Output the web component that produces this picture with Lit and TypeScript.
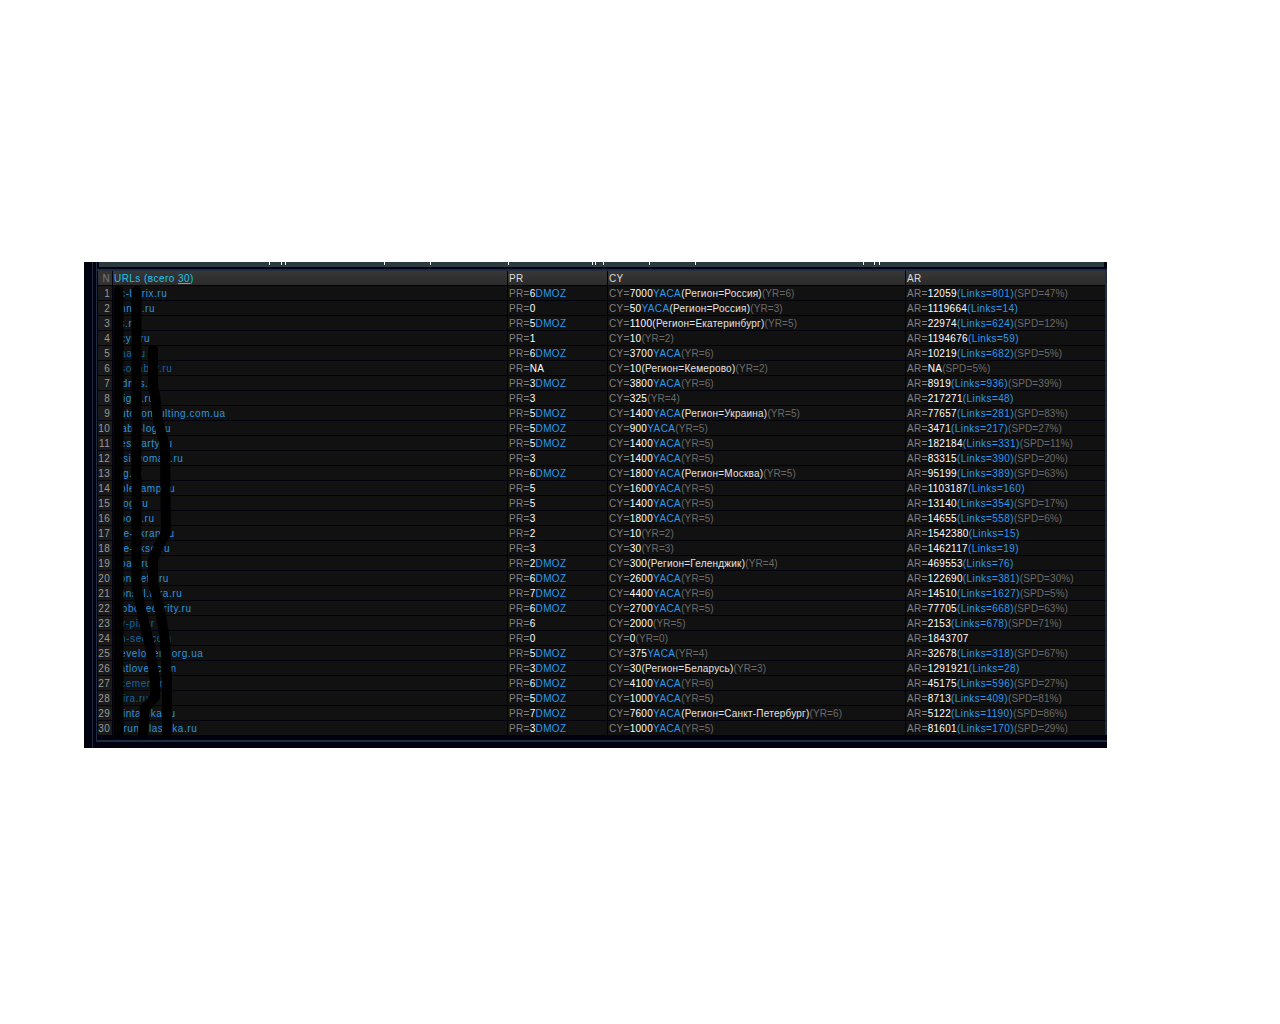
import { LitElement, html, css, svg } from "lit";
import { customElement } from "lit/decorators.js";

const R = (u: string, pr: string, d: number, cy: string, y: number, reg: string, yr: string, ar: string, l: string, s: string, dim = 0) =>
  ({ u, pr, d: !!d, cy, y: !!y, reg, yr, ar, l, s, dim: !!dim });

const rows = [
  R("1c-bitrix.ru", "6", 1, "7000", 1, "Россия", "6", "12059", "801", "47"),
  R("1nn.n.ru", "0", 0, "50", 1, "Россия", "3", "1119664", "14", ""),
  R("ss.ru", "5", 1, "1100", 0, "Екатеринбург", "5", "22974", "624", "12"),
  R("acys.ru", "1", 0, "10", 0, "", "2", "1194676", "59", ""),
  R("aaa.ru", "6", 1, "3700", 1, "", "6", "10219", "682", "5", 1),
  R("asocabar.ru", "NA", 0, "10", 0, "Кемерово", "2", "NA", "", "5", 1),
  R("wdnss.ru", "3", 1, "3800", 1, "", "6", "8919", "936", "39"),
  R("migor.ru", "3", 0, "325", 0, "", "4", "217271", "48", ""),
  R("autoconsulting.com.ua", "5", 1, "1400", 1, "Украина", "5", "77657", "281", "83"),
  R("frabs-log.ru", "5", 1, "900", 1, "", "5", "3471", "217", "27"),
  R("1es.party.ru", "5", 1, "1400", 1, "", "5", "182184", "331", "11"),
  R("lesi-woman.ru", "3", 0, "1400", 1, "", "5", "83315", "390", "20"),
  R("mg.ru", "6", 1, "1800", 1, "Москва", "5", "95199", "389", "63"),
  R("ablexamp.ru", "5", 0, "1600", 1, "", "5", "1103187", "160", ""),
  R("blog.ru", "5", 0, "1400", 1, "", "5", "13140", "354", "17"),
  R("zboot.ru", "3", 0, "1800", 1, "", "5", "14655", "558", "6"),
  R("the-ekran.ru", "2", 0, "10", 0, "", "2", "1542380", "15", ""),
  R("the-ekse.ru", "3", 0, "30", 0, "", "3", "1462117", "19", ""),
  R("abaz.ru", "2", 1, "300", 0, "Геленджик", "4", "469553", "76", ""),
  R("konmets.ru", "6", 1, "2600", 1, "", "5", "122690", "381", "30"),
  R("konsul.tura.ru", "7", 1, "4400", 1, "", "6", "14510", "1627", "5"),
  R("wobosecurity.ru", "6", 1, "2700", 1, "", "5", "77705", "668", "63"),
  R("ev-pinor", "6", 0, "2000", 0, "", "5", "2153", "678", "71", 1),
  R("an-seo.com", "0", 0, "0", 0, "", "0", "1843707", "", "", 1),
  R("developers.org.ua", "5", 1, "375", 1, "", "4", "32678", "318", "67"),
  R("catlover.com", "3", 1, "30", 0, "Беларусь", "3", "1291921", "28", ""),
  R("ucement.ru", "6", 1, "4100", 1, "", "6", "45175", "596", "27", 1),
  R("mira.ru", "5", 1, "1000", 1, "", "5", "8713", "409", "81", 1),
  R("mintarilka.ru", "7", 1, "7600", 1, "Санкт-Петербург", "6", "5122", "1190", "86"),
  R("atrunk-lasioka.ru", "3", 1, "1000", 1, "", "5", "81601", "170", "29"),
];

const ticks = [269, 281, 285, 384, 430, 508, 592, 595, 603, 649, 695, 863, 874, 879];

@customElement("app-root")
export class AppRoot extends LitElement {
  static styles = css`
    :host {
      display: block;
      position: relative;
      height: 1024px;
      background: #fff;
      padding: 262px 0 0 84px;
      box-sizing: border-box;
      font: 10px/13px "Liberation Sans", Arial, sans-serif;
      letter-spacing: 0.3px;
      color: #808080;
    }
    .frame { width: 1023px; height: 486px; box-sizing: border-box; background: #02020f; padding-left: 8px; display: flex; flex-direction: column; }
    .rail { flex: 1; border-left: 1px solid #1f2c42; padding-left: 3px; display: flex; flex-direction: column; }
    .panel { height: 479px; box-sizing: border-box; border-left: 1px solid #1f2c42; border-bottom: 1px solid #1f2c42; display: flex; flex-direction: column; }
    .band { height: 5px; background: #2a3a3e; margin: 0 3px 0 2px; flex: none; }
    .rule { height: 2px; background: #1f2c42; margin-top: 2px; flex: none; }
    .wrap { display: flex; flex: none; }
    .grid { width: 1007px; margin-left: 1px; display: grid; grid-template-columns: 14px 394px 99px 297px 199px; column-gap: 1px; row-gap: 1px; }
    .edge { width: 2px; background: #1f2c42; flex: none; }
    .foot { height: 1px; background: #1f2c42; }
    .c { height: 14px; background: #111; padding: 1px 0 0 1px; white-space: nowrap; overflow: hidden; box-sizing: border-box; }
    .h { background: linear-gradient(#373737, #2b2b2b); color: #ddd; }
    .n { background: #1a1a1a; color: #999; text-align: right; padding: 1px 2px 0 0; }
    .h.n { background: #333; color: #777; }
    .h.u { color: #19c4ee; letter-spacing: 0.45px; }
    .h.u u { color: #19c4ee; }
    a { color: #2d93dc; text-decoration: none; letter-spacing: 0.55px; }
    a.dim { color: #10659f; }
    .v { color: #fff; }
    .b { color: #2a98f0; letter-spacing: 0.4px; }
    .g { color: #6a6a6a; letter-spacing: 0.1px; }
    .w { color: #e4e4e4; letter-spacing: 0.22px; }
    .tick { position: absolute; top: 262px; width: 1px; height: 3px; background: #fff; }
    svg { position: absolute; left: 0; top: 0; pointer-events: none; }
  `;

  render() {
    return html`
      <div class="frame"><div class="rail">
        <div class="panel">
          <div class="band"></div>
          <div class="rule"></div>
          <div class="wrap">
            <div class="grid">
              <div class="c h n">N</div>
              <div class="c h u">URLs (всего <u>30</u>)</div>
              <div class="c h">PR</div>
              <div class="c h">CY</div>
              <div class="c h">AR</div>
              ${rows.map((r, i) => html`
                <div class="c n">${i + 1}</div>
                <div class="c"><a class=${r.dim ? "dim" : ""}>${r.u}</a></div>
                <div class="c">PR=<span class="v">${r.pr}</span>${r.d ? html`<span class="b">DMOZ</span>` : ""}</div>
                <div class="c">CY=<span class="v">${r.cy}</span>${r.y ? html`<span class="b">YACA</span>` : ""}${r.reg ? html`<span class="w">(Регион=${r.reg})</span>` : ""}<span class="g">(YR=${r.yr})</span></div>
                <div class="c">AR=<span class="v">${r.ar}</span>${r.l ? html`<span class="b">(Links=${r.l})</span>` : ""}${r.s ? html`<span class="g">(SPD=${r.s}%)</span>` : ""}</div>
              `)}
            </div>
            <div class="edge"></div>
          </div>
        </div>
        <div class="foot"></div>
      </div></div>
      ${ticks.map((x) => html`<i class="tick" style="left:${x}px"></i>`)}
      <svg width="1280" height="1024" fill="none" stroke="#000" stroke-width="10" stroke-linecap="round" stroke-linejoin="round">
        ${svg`<path d="M118.5 291 V733"/>`}
        ${svg`<path d="M136.5 291 V580 L137 590 L142 613 L150 647 L155 680 L155 697 L145 708 L143 733"/>`}
        ${svg`<path d="M153 350 V388 L155 395 L158 420 L165 447 L166 533 L158 547 L153 560 V583 L160 610 L165 640 L167 680 V733"/>`}
      </svg>
    `;
  }
}
